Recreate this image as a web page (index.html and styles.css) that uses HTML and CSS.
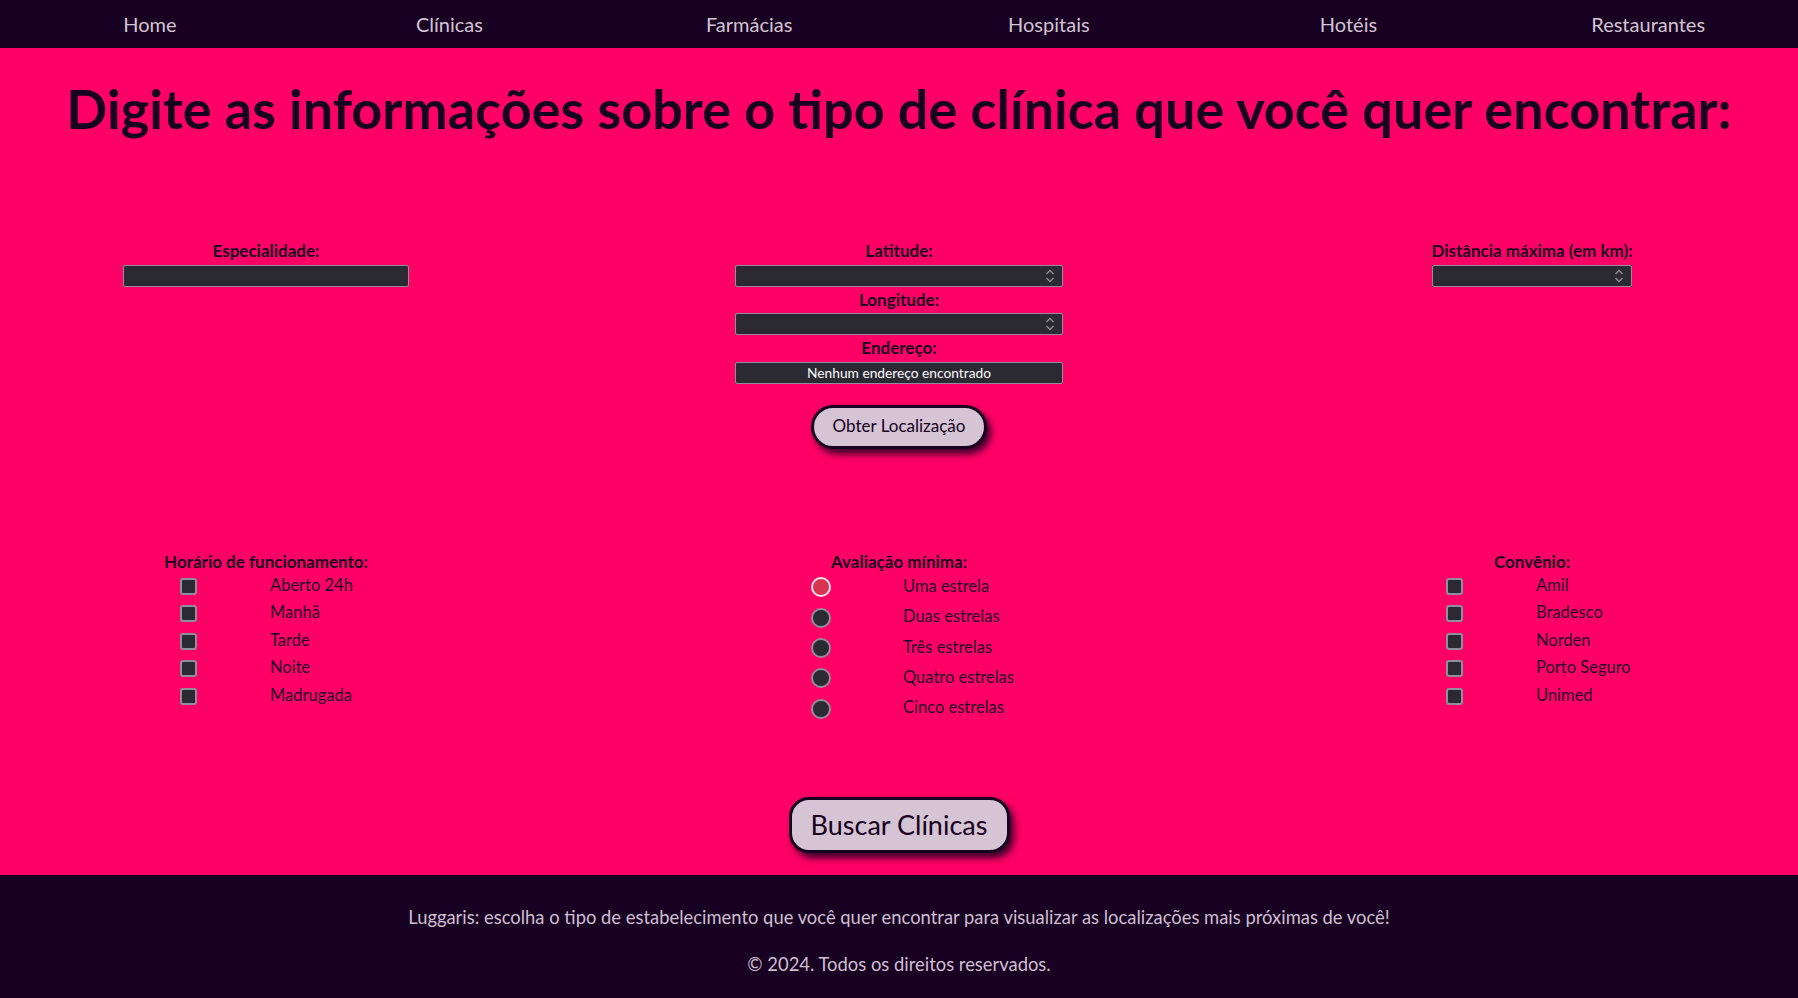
FILE: index.html
```html
<!DOCTYPE html>
<html lang="pt-BR">
<head>
<meta charset="utf-8">
<title>Luggaris - Clínicas</title>
<link rel="stylesheet" href="styles.css">
</head>
<body>
<nav class="nav">
  <a class="nav-link" href="#">Home</a>
  <a class="nav-link" href="#">Clínicas</a>
  <a class="nav-link" href="#">Farmácias</a>
  <a class="nav-link" href="#">Hospitais</a>
  <a class="nav-link" href="#">Hotéis</a>
  <a class="nav-link" href="#">Restaurantes</a>
</nav>

<main class="main">
  <h1 class="title">Digite as informações sobre o tipo de clínica que você quer encontrar:</h1>

  <section class="grid row-top">
    <div class="col">
      <label class="label">Especialidade:</label>
      <div class="field field-esp"><input class="inp" type="text"></div>
    </div>

    <div class="col">
      <label class="label">Latitude:</label>
      <div class="field field-geo">
        <input class="inp" type="number">
        <svg class="spin" width="10" height="16" viewBox="0 0 10 16"><path d="M1.5 6 L5 2.5 L8.5 6 M1.5 10 L5 13.5 L8.5 10" fill="none" stroke="#8f8f9d" stroke-width="1.3"/></svg>
      </div>
      <label class="label">Longitude:</label>
      <div class="field field-geo">
        <input class="inp" type="number">
        <svg class="spin" width="10" height="16" viewBox="0 0 10 16"><path d="M1.5 6 L5 2.5 L8.5 6 M1.5 10 L5 13.5 L8.5 10" fill="none" stroke="#8f8f9d" stroke-width="1.3"/></svg>
      </div>
      <label class="label">Endereço:</label>
      <div class="field field-geo field-addr">Nenhum endereço encontrado</div>
      <button class="btn btn-loc" type="button">Obter Localização</button>
    </div>

    <div class="col">
      <label class="label">Distância máxima (em km):</label>
      <div class="field field-dist">
        <input class="inp" type="number">
        <svg class="spin" width="10" height="16" viewBox="0 0 10 16"><path d="M1.5 6 L5 2.5 L8.5 6 M1.5 10 L5 13.5 L8.5 10" fill="none" stroke="#8f8f9d" stroke-width="1.3"/></svg>
      </div>
    </div>
  </section>

  <section class="grid row-bottom">
    <div class="col">
      <div class="label">Horário de funcionamento:</div>
      <div class="opts">
        <label class="opt"><span class="cell"><input class="chk" type="checkbox"></span><span class="txt">Aberto 24h</span></label>
        <label class="opt"><span class="cell"><input class="chk" type="checkbox"></span><span class="txt">Manhã</span></label>
        <label class="opt"><span class="cell"><input class="chk" type="checkbox"></span><span class="txt">Tarde</span></label>
        <label class="opt"><span class="cell"><input class="chk" type="checkbox"></span><span class="txt">Noite</span></label>
        <label class="opt"><span class="cell"><input class="chk" type="checkbox"></span><span class="txt">Madrugada</span></label>
      </div>
    </div>

    <div class="col">
      <div class="label">Avaliação mínima:</div>
      <div class="opts opts-radio">
        <label class="opt"><span class="cell"><input class="rad rad-first" type="radio" name="av"></span><span class="txt">Uma estrela</span></label>
        <label class="opt"><span class="cell"><input class="rad" type="radio" name="av"></span><span class="txt">Duas estrelas</span></label>
        <label class="opt"><span class="cell"><input class="rad" type="radio" name="av"></span><span class="txt">Três estrelas</span></label>
        <label class="opt"><span class="cell"><input class="rad" type="radio" name="av"></span><span class="txt">Quatro estrelas</span></label>
        <label class="opt"><span class="cell"><input class="rad" type="radio" name="av"></span><span class="txt">Cinco estrelas</span></label>
      </div>
    </div>

    <div class="col">
      <div class="label">Convênio:</div>
      <div class="opts">
        <label class="opt"><span class="cell"><input class="chk" type="checkbox"></span><span class="txt">Amil</span></label>
        <label class="opt"><span class="cell"><input class="chk" type="checkbox"></span><span class="txt">Bradesco</span></label>
        <label class="opt"><span class="cell"><input class="chk" type="checkbox"></span><span class="txt">Norden</span></label>
        <label class="opt"><span class="cell"><input class="chk" type="checkbox"></span><span class="txt">Porto Seguro</span></label>
        <label class="opt"><span class="cell"><input class="chk" type="checkbox"></span><span class="txt">Unimed</span></label>
      </div>
    </div>
  </section>

  <div class="search-wrap">
    <button class="btn btn-search" type="button">Buscar Clínicas</button>
  </div>
</main>

<footer class="footer">
  <p class="foot-line">Luggaris: escolha o tipo de estabelecimento que você quer encontrar para visualizar as localizações mais próximas de você!</p>
  <p class="foot-line">© 2024. Todos os direitos reservados.</p>
</footer>
</body>
</html>
```

FILE: styles.css
```css
* { box-sizing: border-box; }

html, body {
  margin: 0;
  padding: 0;
}

body {
  background: #ff0066;
  font-family: Lato, "Noto Sans", sans-serif;
  color: #170020;
}

.nav {
  height: 48px;
  background: #170021;
  display: grid;
  grid-template-columns: repeat(6, 1fr);
  align-items: center;
  justify-items: center;
}

.nav-link {
  color: #d4c4d4;
  text-decoration: none;
  font-size: 20px;
  line-height: 24px;
}

.main {
  padding-top: 30.5px;
  height: 826.5px;
}

.title {
  margin: 0;
  text-align: center;
  font-size: 54px;
  line-height: 60px;
  font-weight: 700;
  color: #170020;
}

.grid {
  display: grid;
  grid-template-columns: 1fr 734px 1fr;
  align-items: start;
}

.row-top {
  margin-top: 101.5px;
}

.row-bottom {
  margin-top: 102px;
}

.col {
  display: flex;
  flex-direction: column;
  align-items: center;
}

.label {
  font-size: 17px;
  line-height: 20px;
  font-weight: 700;
  color: #170020;
  padding-top: 1px;
  margin-bottom: 3.5px;
  white-space: nowrap;
}

.field {
  height: 22px;
  background: #2b2a33;
  border: 1px solid #8f8f9d;
  border-radius: 2px;
  display: flex;
  align-items: center;
  margin-bottom: 2px;
}

.field-esp { width: 286px; }
.field-geo { width: 328px; }
.field-dist { width: 200px; }

.inp {
  flex: 1;
  min-width: 0;
  height: 100%;
  border: 0;
  background: transparent;
  color: #fbfbfe;
  padding: 0 4px;
  outline: none;
  -moz-appearance: textfield;
}

.inp::-webkit-inner-spin-button,
.inp::-webkit-outer-spin-button {
  -webkit-appearance: none;
  margin: 0;
}

.spin {
  flex: none;
  margin-right: 7px;
}

.field-addr {
  justify-content: center;
  color: #fbfbfe;
  font-size: 13.75px;
}

.btn {
  background: #d4c4d4;
  color: #170020;
  border: 3px solid #170020;
  font-family: Lato, "Noto Sans", sans-serif;
  box-shadow: 4px 5px 7px rgba(23, 0, 32, 0.85);
  cursor: pointer;
}

.btn-loc {
  margin-top: 19.3px;
  height: 44px;
  padding: 0 14px;
  width: 176px;
  border-radius: 22px;
  font-size: 17px;
  padding-bottom: 2px;
}

.label + .opts { margin-top: -3px; }

.opts {
  width: 312px;
  display: flex;
  flex-direction: column;
}

.opt {
  display: grid;
  grid-template-columns: 1fr 1fr;
  align-items: center;
  height: 27.5px;
}

.opts-radio .opt {
  height: 30.3px;
}

.opts-radio {
  margin-top: -1px;
}

.cell {
  display: flex;
  justify-content: center;
  align-items: center;
}

.txt {
  padding-left: 4px;
  padding-bottom: 3px;
  font-size: 16.5px;
  line-height: 20px;
  font-weight: 400;
  color: #24002c;
  white-space: nowrap;
}

.chk {
  -webkit-appearance: none;
  appearance: none;
  margin: 0;
  width: 17px;
  height: 17px;
  background: #2b2a33;
  border: 2px solid #8f8f9d;
  border-radius: 3px;
}

.rad {
  -webkit-appearance: none;
  appearance: none;
  margin: 0;
  width: 20px;
  height: 20px;
  background: #2b2a33;
  border: 2px solid #8f8f9d;
  border-radius: 50%;
}

.rad-first {
  background: #d8344f;
  border-color: #f6e3ea;
}

.search-wrap {
  display: flex;
  justify-content: center;
  margin-top: 73px;
}

.btn-search {
  height: 56px;
  width: 221px;
  border-radius: 20px;
  font-size: 27px;
  padding: 0 0 1px;
}

.footer {
  background: #170021;
  height: 123.5px;
  padding-top: 31.5px;
  text-align: center;
  color: #cfbfd1;
}

.foot-line {
  margin: 0;
  font-size: 18.4px;
  line-height: 22px;
}

.foot-line + .foot-line {
  margin-top: 25px;
}
```
